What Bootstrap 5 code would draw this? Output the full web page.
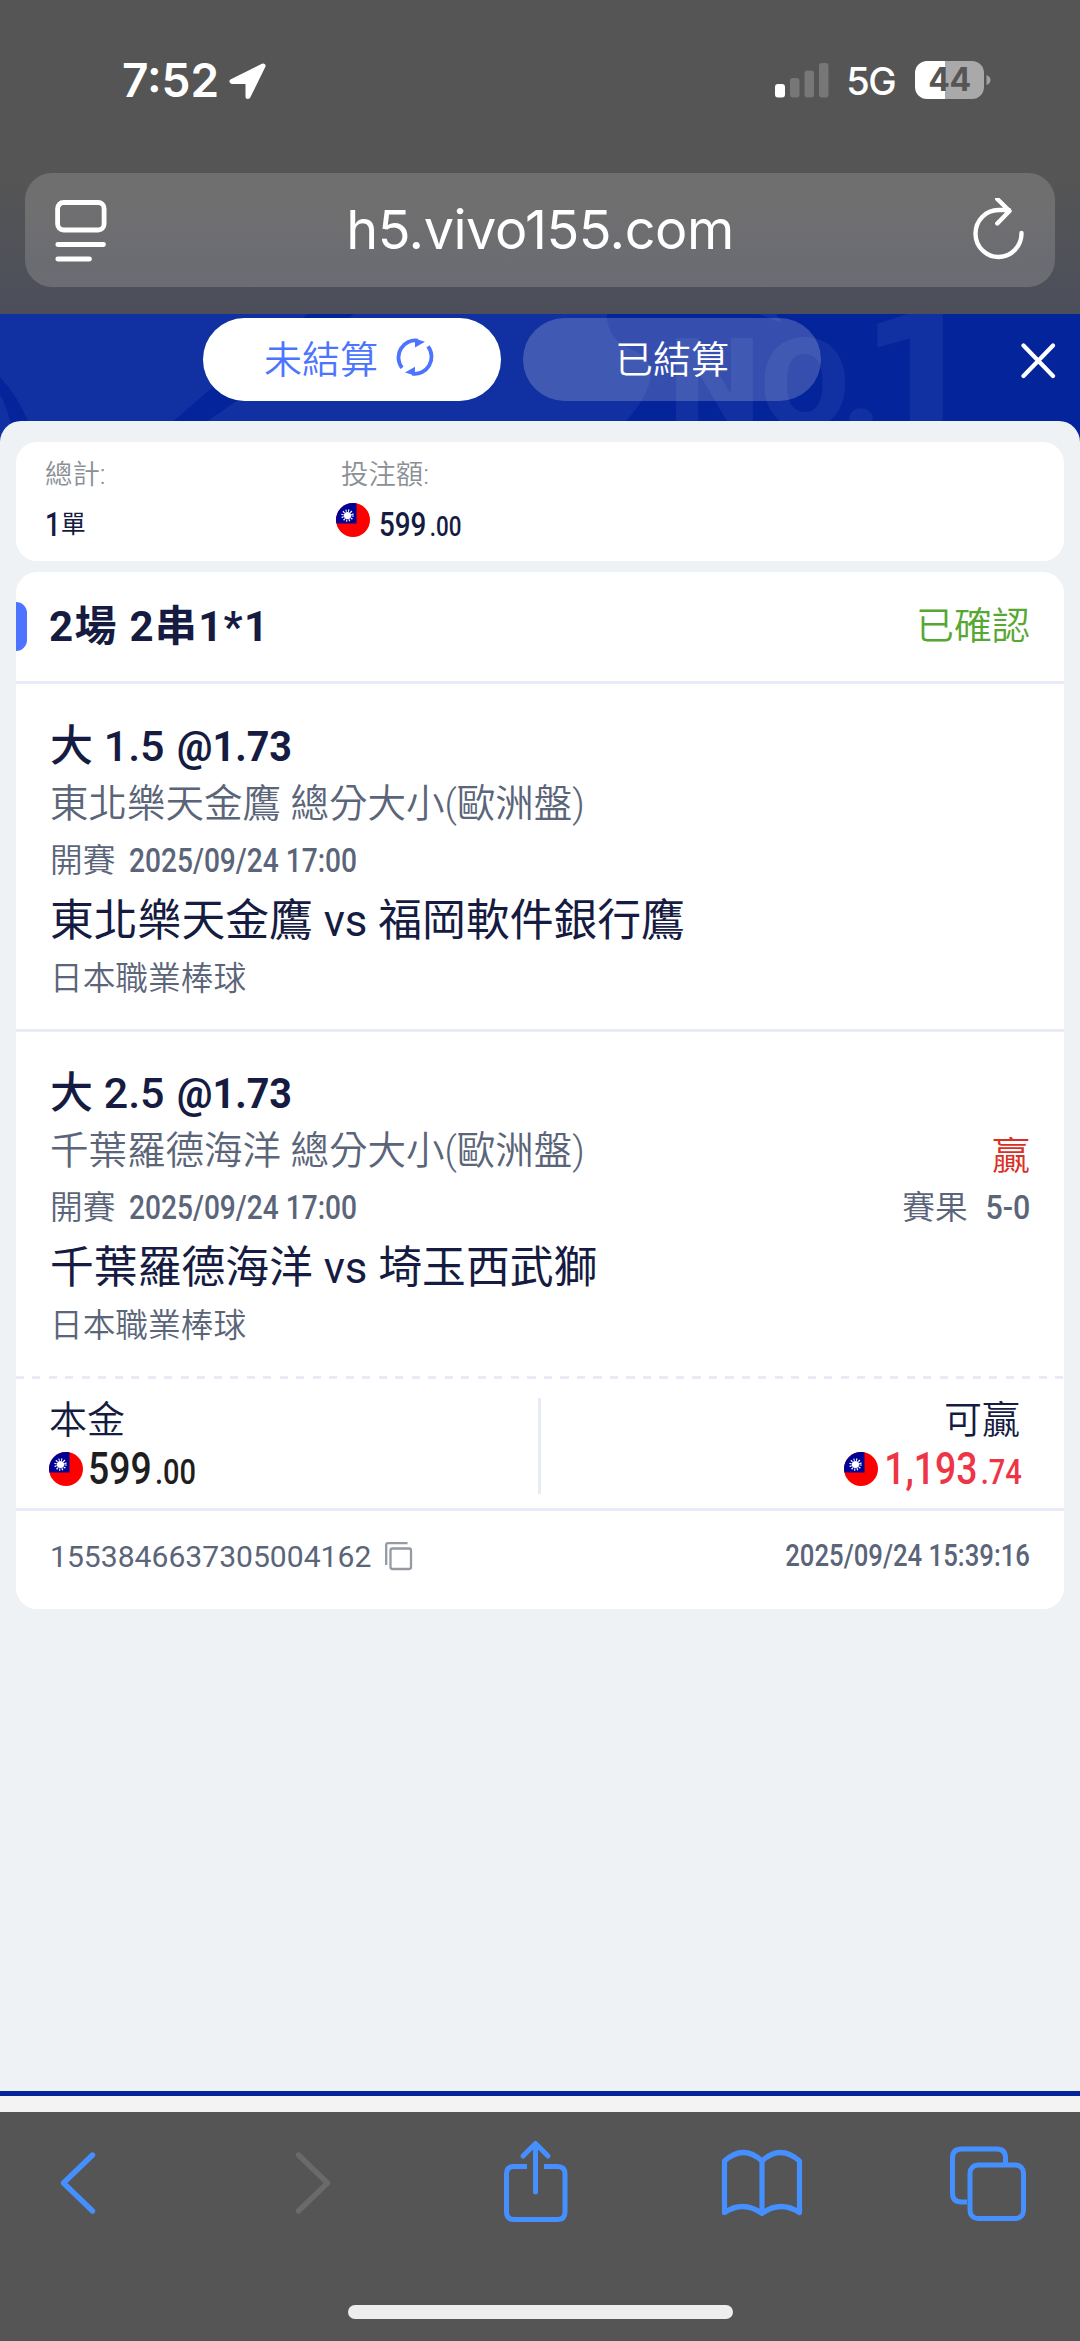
<!DOCTYPE html>
<html lang="zh-Hant">
<head>
<meta charset="utf-8">
<meta name="viewport" content="width=device-width, initial-scale=1">
<title>h5.vivo155.com</title>
<link href="https://cdn.jsdelivr.net/npm/bootstrap@5.3.0/dist/css/bootstrap.min.css" rel="stylesheet">
<style>
  body { font-family: "Inter", "Noto Sans CJK TC", sans-serif; background: #555; color: #151b41; width: 1080px; height: 2341px; overflow: hidden; }
  svg { display: block; flex: none; }
  .cjk { font-family: "Roboto", "Noto Sans CJK TC", sans-serif; font-weight: 350; }
  .top-area { height: 314px; background: linear-gradient(#555 0, #555 180px, #4d505a 295px, #4c4f59 100%); color: #fff; }
  .status { height: 173px; padding: 61px 88px 0 122px; }
  .clock { font-size: 46px; font-weight: 600; line-height: 39px; letter-spacing: 0; }
  .net { font-size: 38px; font-weight: 500; line-height: 38px; letter-spacing: -1.6px; margin-left: 17px; padding-top: 1px; }
  .battery { width: 69px; height: 38px; border-radius: 12px; background: linear-gradient(90deg, #fff 30px, #a9a9a9 30px); color: #555; font-size: 32px; font-weight: 700; line-height: 38px; letter-spacing: -.5px; margin-left: 20px; }
  .address { margin: 0 25px; height: 114px; border-radius: 27px; padding: 0 30px; background: linear-gradient(#6f6f6f, #6f6f70 35%, #6b6c72 80%, #6c6d73); }
  .host { font-size: 54px; line-height: 114px; letter-spacing: -.5px; }

  .page-head { height: 128px; background: #04249b; }
  .head-row { padding: 4px 24px 0 203px; }
  .tab-pill { width: 298px; height: 83px; border-radius: 42px; font-size: 38px; line-height: 84px; }
  .tab-on { background: #fff; color: #4c74ff; padding-left: 61px; }
  .tab-off { background: rgba(255,255,255,.2); color: #fff; margin-left: 22px; }
  .refresh { margin: 20px 0 0 17px; }
  .sheet { height: 1670px; margin-top: -21px; border-radius: 21px 21px 0 0; background: #eef2f5; padding: 21px 16px 0; }
  .panel { background: #fff; border-radius: 21px; }
  .summary { height: 119px; padding: 13px 29px 0; margin-bottom: 11px; }
  .summary .cap { font-size: 27.4px; line-height: 41px; color: #8b9097; }
  .sum-first { width: 291px; }
  .sum-row { height: 40px; margin-top: 9px; }
  .ticket { height: 1037px; overflow: hidden; }
  .ticket-head { height: 112px; border-bottom: 3px solid #e7ebf5; padding-right: 34px; }
  .marker { width: 11px; height: 49px; border-radius: 0 11px 11px 0; background: #4c74ff; }
  .ticket-title { font-family: "Roboto", "Noto Sans CJK TC", sans-serif; font-weight: 700; font-size: 42px; letter-spacing: 1.3px; margin-left: 22px; }
  .ok-state { color: #57a833; font-size: 38px; }
  .bet { padding: 33px 34px 0 34px; height: 345px; }
  .bet + .bet { border-top: 3px solid #e7ebf5; height: 347px; padding-top: 32px; }
  .line { height: 58px; white-space: nowrap; }
  .pick { font-family: "Roboto", "Noto Sans CJK TC", sans-serif; font-weight: 500; font-size: 43px; }
  .pick .din { margin-left: 12px; font-weight: 700; transform: scaleX(.92); }
  .market { font-size: 38.5px; color: #5b6579; }
  .meta { font-size: 32.7px; color: #5b6579; }
  .meta .din { margin-left: 14px; transform: scaleX(.86); }
  .league { padding-top: 3px; }
  .teams { font-family: "Roboto", "Noto Sans CJK TC", sans-serif; font-size: 43.8px; font-weight: 400; padding-top: 3px; }
  .din { font-family: "Roboto", sans-serif; display: inline-block; font-weight: 500; transform: scaleX(.83); transform-origin: left center; white-space: nowrap; }
  .din-end { transform-origin: right center; }
  .cents { margin-left: 4px; }
  .won { color: #d93026; font-size: 38px; padding-top: 10px; }
  .dash { height: 3px; background: repeating-linear-gradient(90deg, #e7ebf5 0 8px, transparent 8px 16.5px); }
  .amounts { height: 129px; padding: 19px 34px 0 33px; }
  .amounts .cap2 { font-size: 38px; line-height: 44px; }
  .amounts .money { font-size: 45px; }
  .amounts .cents { font-size: 35px; }
  .half { width: 489px; }
  .money-row { height: 54px; }
  .rule { width: 3px; height: 96px; background: #e7ebf5; }
  .foot { border-top: 3px solid #e7ebf5; height: 101px; padding: 0 34px 7px 34px; color: #5b6579; }
  .serial { font-family: "Roboto", sans-serif; font-size: 30.1px; }
  .win { color: #ee3546; padding-right: 8px; }
  .blue-line { height: 5px; background: #04249b; }
  .pale-line { height: 16px; background: #f3f3f3; }
  .toolbar { height: 229px; background: #555; }
  .home-bar { width: 385px; height: 14px; border-radius: 7px; background: #eee; margin: 70px auto 0; }
  .tools { height: 123px; padding-left: 50px; }
</style>
</head>
<body>
<svg width="0" height="0" class="position-absolute">
  <defs>
    <clipPath id="disc"><circle cx="17" cy="17" r="17"/></clipPath>
    <symbol id="flag" viewBox="0 0 34 34">
      <g clip-path="url(#disc)">
        <rect width="34" height="34" fill="#fe0000"/>
        <rect width="20.5" height="20.5" fill="#000095"/>
        <circle cx="11.5" cy="12.5" r="5" fill="none" stroke="#fff" stroke-width="2.4" stroke-dasharray="1.1 1.52"/>
        <circle cx="11.5" cy="12.5" r="3.6" fill="#fff"/>
      </g>
    </symbol>
  </defs>
</svg>

<header class="top-area">
  <div class="status d-flex align-items-start justify-content-between">
    <div class="d-flex">
      <span class="clock">7:52</span>
      <svg class="ms-2" width="42" height="40" viewBox="0 0 42 40"><path d="M36 5 L5 20.500 H21 V35.500 Z" fill="#fff" stroke="#fff" stroke-width="5" stroke-linejoin="round"/></svg>
    </div>
    <div class="d-flex">
      <svg width="54" height="38" viewBox="0 0 54 38"><rect x="0" y="23" width="10" height="13.500" rx="3" fill="#fff"/><g fill="#777"><rect x="15" y="17" width="9.500" height="19.500" rx="3"/><rect x="29.500" y="9.500" width="9.500" height="27" rx="3"/><rect x="44" y="2" width="9.500" height="34.500" rx="3"/></g></svg>
      <span class="net">5G</span>
      <span class="battery text-center">44</span>
      <svg width="8" height="38" viewBox="0 0 8 38"><path d="M2.500 14 Q6.500 15.500 6.500 19 Q6.500 22.500 2.500 24 Z" fill="#a0a0a0"/></svg>
    </div>
  </div>
  <div class="address d-flex align-items-center justify-content-between">
    <svg width="52" height="64" viewBox="0 0 52 64" fill="none" stroke="#fff" stroke-width="4.800" stroke-linecap="round"><rect x="2.600" y="4.500" width="46.500" height="27.500" rx="6"/><path d="M2.800 46.500H48.500M2.800 61H34.500"/></svg>
    <span class="host">h5.vivo155.com</span>
    <svg width="52" height="64" viewBox="0 0 52 64" fill="none" stroke="#fff" stroke-width="4.400" stroke-linecap="round" stroke-linejoin="round"><path d="M48.500 35 A23 23.500 0 1 1 25.500 12 H36M24.300 1 36.500 13 24.300 25.500"/></svg>
  </div>
</header>

<section class="page-head position-relative overflow-hidden">
  <svg class="position-absolute top-0 start-0" width="1080" height="128" viewBox="0 0 1080 128">
    <path d="M0 0H607Q606 26 635 37Q658 48 647 76Q641 92 622 111V128H0Z" fill="#1130a1"/>
    <path d="M308 0H354Q318 28 285 54L203 110H170L235 54Z" fill="#04249b"/>
    <path d="M0 63Q18 82 30 112L11 112Q7 92 0 81Z" fill="#04249b"/>
    <path d="M758 0H776L782 9Z" fill="#1130a1"/>
    <g fill="#1130a1" font-family="Roboto, sans-serif" font-weight="900">
      <text x="669" y="114" font-size="126" textLength="212" lengthAdjust="spacingAndGlyphs">NO.</text>
      <text x="861" y="124" font-size="190" textLength="116" lengthAdjust="spacingAndGlyphs">1</text>
    </g>
  </svg>
  <div class="head-row position-relative d-flex cjk">
    <div class="tab-pill tab-on d-flex">
      <span>未結算</span>
      <svg class="refresh" width="40" height="40" viewBox="0 0 40 40"><g fill="none" stroke="#4c74ff" stroke-width="3.800"><path d="M7 29.800A16.800 17 0 0 1 23 2.600"/><path d="M33 8.400A16.800 17 0 0 1 17 35.600"/></g><path d="M20 .8L30 3.800L20 9.500ZM20 37.400L10 34.400L20 28.700Z" fill="#4c74ff"/></svg>
    </div>
    <div class="tab-pill tab-off text-center">已結算</div>
    <svg class="ms-auto mt-4" width="35" height="37" viewBox="0 0 35 37"><path d="M2.500 3.500L32 34M32 3.500L2.500 34" stroke="#fff" stroke-width="4.200" stroke-linecap="round"/></svg>
  </div>
</section>

<main class="sheet position-relative">
  <section class="panel summary d-flex">
    <div class="sum-first">
      <div class="cap cjk">總計:</div>
      <div class="sum-row d-flex align-items-center"><span class="din" style="font-size:33px">1</span><span class="cjk" style="font-size:25px;font-weight:400;margin-left:-3px">單</span></div>
    </div>
    <div>
      <div class="cap cjk" style="padding-left:5px">投注額:</div>
      <div class="sum-row d-flex align-items-center"><svg width="34" height="34" style="margin-bottom:11px"><use href="#flag"/></svg><div class="din" style="margin-left:9px;font-size:33.500px">599<span class="cents" style="font-size:27px">.00</span></div></div>
    </div>
  </section>

  <section class="panel ticket">
    <div class="ticket-head d-flex align-items-center">
      <span class="marker"></span><span class="ticket-title">2場 2串1*1</span>
      <span class="ok-state cjk ms-auto">已確認</span>
    </div>

    <article class="bet">
      <div class="line pick d-flex align-items-center">大 1.5 <span class="din">@1.73</span></div>
      <div class="line market cjk d-flex align-items-center">東北樂天金鷹 總分大小(歐洲盤)</div>
      <div class="line meta cjk d-flex align-items-center">開賽<span class="din">2025/09/24 17:00</span></div>
      <div class="line teams d-flex align-items-center">東北樂天金鷹 vs 福岡軟件銀行鷹</div>
      <div class="line meta league cjk d-flex align-items-center">日本職業棒球</div>
    </article>

    <article class="bet">
      <div class="line pick d-flex align-items-center">大 2.5 <span class="din">@1.73</span></div>
      <div class="line market cjk d-flex align-items-center justify-content-between">千葉羅德海洋 總分大小(歐洲盤)<span class="won">贏</span></div>
      <div class="line meta cjk d-flex align-items-center justify-content-between"><span>開賽<span class="din">2025/09/24 17:00</span></span><span>賽果<span class="din din-end" style="transform:scaleX(.93)">5-0</span></span></div>
      <div class="line teams d-flex align-items-center">千葉羅德海洋 vs 埼玉西武獅</div>
      <div class="line meta league cjk d-flex align-items-center">日本職業棒球</div>
    </article>

    <div class="dash"></div>
    <div class="amounts d-flex justify-content-between">
      <div class="half">
        <div class="cap2 cjk">本金</div>
        <div class="money-row d-flex align-items-center"><svg width="34" height="34"><use href="#flag"/></svg><div class="din money" style="margin-left:5px;color:#1e1e1e">599<span class="cents">.00</span></div></div>
      </div>
      <div class="rule"></div>
      <div class="half">
        <div class="cap2 cjk text-end" style="padding-right:10px">可贏</div>
        <div class="money-row d-flex align-items-center justify-content-end win"><svg width="34" height="34" style="margin-right:-22px"><use href="#flag"/></svg><div class="din din-end money">1,193<span class="cents">.74</span></div></div>
      </div>
    </div>
    <div class="foot d-flex align-items-center">
      <span class="serial">1553846637305004162</span>
      <svg style="margin:-2px 0 0 13px" width="30" height="30" viewBox="0 0 30 30" fill="none" stroke="#959aa3" stroke-width="2.300"><rect x="6.500" y="7.500" width="20.500" height="20.500" rx="2"/><path d="M2.200 24V4Q2.200 2.200 4 2.200H23.500"/></svg>
      <span class="din din-end ms-auto" style="font-size:31px">2025/09/24 15:39:16</span>
    </div>
  </section>
</main>
<div class="blue-line"></div>
<div class="pale-line"></div>

<nav class="toolbar">
  <div class="tools d-flex">
    <svg width="160" height="123" viewBox="50 2112 160 123" fill="none" stroke="#458fff" stroke-width="5.400" stroke-linecap="round" stroke-linejoin="round"><path d="M92.500 2155L63.500 2183L92.500 2211"/></svg>
    <svg width="240" height="123" viewBox="210 2112 240 123" fill="none" stroke="#6a6a6a" stroke-width="5.400" stroke-linecap="round" stroke-linejoin="round"><path d="M298.500 2155L327.500 2183L298.500 2211"/></svg>
    <svg width="200" height="123" viewBox="450 2112 200 123" fill="none" stroke="#458fff" stroke-width="5"><path d="M527 2166.500H514Q506.500 2166.500 506.500 2174V2212Q506.500 2219.500 514 2219.500H557.500Q565 2219.500 565 2212V2174Q565 2166.500 557.500 2166.500H544"/><path stroke-linecap="round" stroke-linejoin="round" d="M535.500 2144V2192M523 2156L535.500 2143.500L548 2156"/></svg>
    <svg width="220" height="123" viewBox="650 2112 220 123" fill="none" stroke="#458fff" stroke-width="5.200" stroke-linecap="round" stroke-linejoin="round"><path d="M762 2161Q743.500 2144 724.500 2161V2212.500Q743.500 2200 762 2213.500Q780 2200 799.500 2212.500V2161Q780 2144 762 2161V2213"/></svg>
    <svg width="180" height="123" viewBox="870 2112 180 123" fill="none" stroke="#458fff" stroke-width="5"><path d="M967 2202H961.500Q952.500 2202 952.500 2193V2158Q952.500 2149 961.500 2149H997Q1005.500 2149 1005.500 2158V2164"/><rect x="970" y="2165" width="53.500" height="53.500" rx="8"/></svg>
  </div>
  <div class="home-bar"></div>
</nav>
<script src="https://cdn.jsdelivr.net/npm/bootstrap@5.3.0/dist/js/bootstrap.bundle.min.js"></script>
</body>
</html>
